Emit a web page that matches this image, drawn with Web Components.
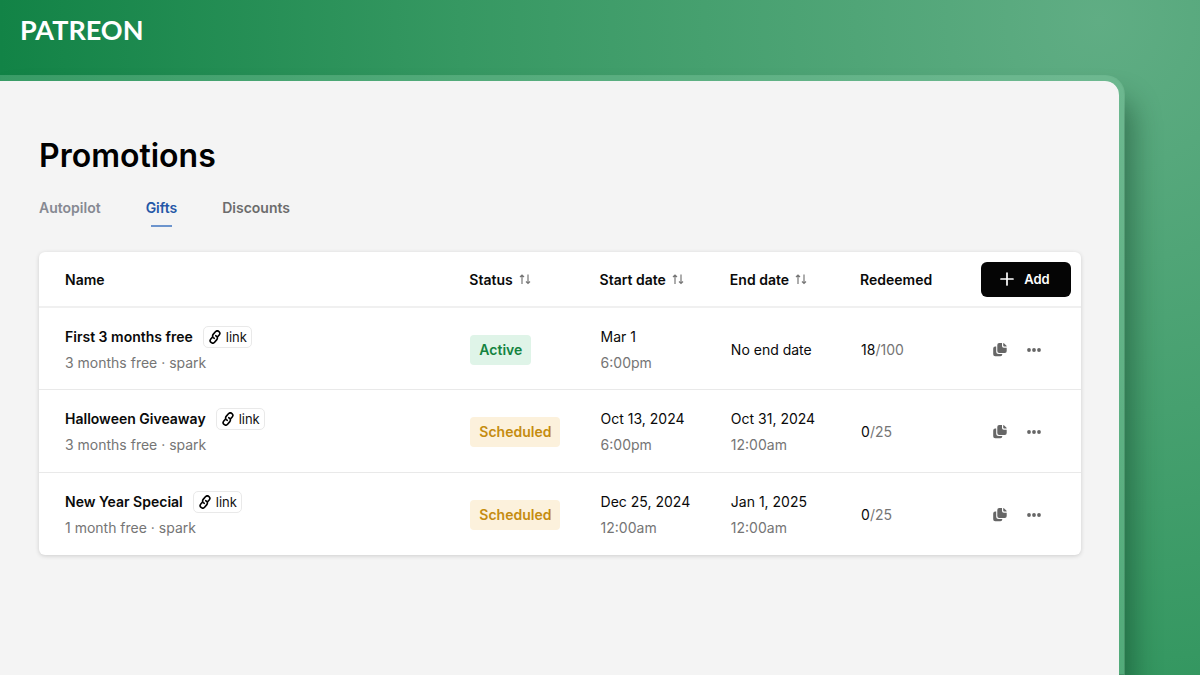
<!DOCTYPE html>
<html lang="en">
<head>
<meta charset="utf-8">
<title>Promotions</title>
<style>
html,body{margin:0;min-height:100%}
body{font-family:Inter,"Liberation Sans",sans-serif;font-size:14px;line-height:26px;color:#0a0a0a}
</style>
</head>
<body>
<promo-app></promo-app>
<script>
const define = (name, html, init) => {
  const tpl = document.createElement('template');
  tpl.innerHTML = html;
  customElements.define(name, class extends HTMLElement {
    connectedCallback() {
      if (this.shadowRoot) return;
      this.attachShadow({ mode: 'open' }).append(tpl.content.cloneNode(true));
      if (init) init(this, this.shadowRoot);
    }
  });
};

define('brand-bar', `<style>
:host{display:block;padding:14px 20px 29px;line-height:0}
a{display:inline-block;color:#fff;text-decoration:none;font:700 27px/32px Lato,Inter,sans-serif}
</style><a href="#">PATREON</a>`);

define('tab-nav', `<style>
:host{display:block}
nav{display:flex;gap:45px}
</style><nav aria-label="Promotion types"><slot></slot></nav>`);

define('tab-link', `<style>
:host{display:block;font-size:14px;font-weight:600;line-height:20px;color:#6c6c6c}
:host([muted]){color:#868992}
:host([active]){color:#2457a7}
a{display:flex;flex-direction:column;align-items:center;gap:7px;color:inherit;text-decoration:none}
a::after{content:"";width:21px;height:2px}
:host([active]) a::after{background:#6c94cd}
</style><a href="#"><slot></slot></a>`);

define('sort-button', `<style>
:host{display:inline-block}
button{display:flex;align-items:center;gap:6px;padding:0;border:0;background:none;font:inherit;color:inherit}
</style><button type="button"><slot></slot><svg width="12" height="12" viewBox="0 0 12 12" fill="none" stroke="#777" stroke-width="1.2" aria-hidden="true"><path d="M3 10V1M1 3 3 1 5 3M9 .5v9M7 7.500l2 2 2-2"/></svg></button>`);

define('add-button', `<style>
:host{display:block}
button{display:flex;align-items:center;justify-content:center;gap:10px;width:90px;height:35px;padding:0 2px 0 0;border:0;border-radius:6px;background:#050505;color:#fff;font:600 13px/20px Inter,sans-serif}
</style><button type="button"><svg width="14" height="14" viewBox="0 0 14 14" stroke="#fff" stroke-width="1.700" stroke-linecap="round" aria-hidden="true"><path d="M7 1v12M1 7h12"/></svg><slot></slot></button>`);

define('link-chip', `<style>
:host{display:inline-block}
a{display:flex;align-items:center;gap:4px;height:20px;padding:0 4px;border:1px solid #e9e9e9;border-radius:5px;color:#111;text-decoration:none;font-size:13px;font-weight:400;line-height:20px}
</style><a href="#"><svg width="14" height="14" viewBox="-7 -7 14 14" fill="none" stroke="#000" stroke-width="1.600" stroke-linecap="round" aria-hidden="true"><g transform="rotate(-49)"><path d="M-2.200-1.900H-4.200a2.500 2.500 0 0 0 0 5H-.8a2.500 2.500 0 0 0 2.300-3.400"/><path d="M2.200 1.900H4.200a2.500 2.500 0 0 0 0-5H.8a2.500 2.500 0 0 0-2.300 3.400"/></g></svg><slot></slot></a>`);

define('status-badge', `<style>
:host{display:inline-block;padding:2px 9px;border-radius:4px;font-weight:600;background:#fcf1dc;color:#c58c10}
:host([kind=active]){background:#dff4e8;color:#14833f}
</style><slot></slot>`);

define('row-actions', `<style>
:host{display:flex;gap:20px;align-items:center}
button{display:block;padding:0;border:0;background:none;line-height:0}
</style>
<button type="button" aria-label="Duplicate"><svg width="14" height="14" viewBox="0 0 14 14" fill="#666"><path d="M6.200 0H9v3q0 1.800 1.800 1.800h2.900V8q0 1.900-1.900 1.900H6.200Q4.300 9.900 4.300 8V1.900Q4.300 0 6.200 0zM10.200 0q.6 0 1 .4l2.100 2.100q.4.4.4 1h-2.500q-1 0-1-1zM2.200 3.600h1V8.500q0 2.500 2.500 2.500h3.600v.2q0 2-2 2H2.200q-2 0-2-2V5.600q0-2 2-2z"/></svg></button>
<button type="button" aria-label="More"><svg width="14" height="14" viewBox="0 0 14 14" fill="#666"><circle cx="2" cy="7" r="1.900"/><circle cx="7" cy="7" r="1.900"/><circle cx="12" cy="7" r="1.900"/></svg></button>`);

const rows = [
  ['First 3 months free', '3 months free · spark', 'Active', 'Mar 1', '6:00pm', 'No end date', '', 18, 100],
  ['Halloween Giveaway', '3 months free · spark', 'Scheduled', 'Oct 13, 2024', '6:00pm', 'Oct 31, 2024', '12:00am', 0, 25],
  ['New Year Special', '1 month free · spark', 'Scheduled', 'Dec 25, 2024', '12:00am', 'Jan 1, 2025', '12:00am', 0, 25]
];

define('promo-table', `<style>
:host{display:block;background:#fff;border-radius:6px;box-shadow:0 1px 4px rgba(0,0,0,.16)}
table{width:100%;border-collapse:separate;border-spacing:0;table-layout:fixed}
.c-name{width:41.300%}.c-col{width:12.500%}
th,td{padding:0;text-align:left;font-weight:400}
thead th{height:54px;font-weight:600}
thead th:not(:last-child){height:52px;padding-top:2px}
thead th:last-child>*{margin-right:10px;float:right}
thead th:first-child,td:first-child{padding-left:26px}
tbody td{height:80px;padding-top:2px;border-top:1px solid #e9e9e9}
tbody tr:first-child td{height:79px;border-top:2px solid #f0f0f0}
td:nth-child(n+2){padding-left:1px}
.name{display:flex;align-items:center;gap:10px;font-weight:600}
small{display:block;font-size:14px;color:#757575}
.of{color:#757575}
tbody td:last-child{padding-left:3px}
</style>
<table><colgroup><col class="c-name"><col class="c-col"><col class="c-col"><col class="c-col"><col class="c-col"><col></colgroup>
<thead><tr><th>Name</th><th><sort-button>Status</sort-button></th><th><sort-button>Start date</sort-button></th><th><sort-button>End date</sort-button></th><th>Redeemed</th><th><add-button>Add</add-button></th></tr></thead>
<tbody></tbody></table>`, (el, root) => {
  root.querySelector('tbody').innerHTML = rows.map(r => `<tr>
<td><div class="name"><span>${r[0]}</span><link-chip>link</link-chip></div><small>${r[1]}</small></td>
<td><status-badge kind="${r[2].toLowerCase()}">${r[2]}</status-badge></td>
<td>${r[3]}<small>${r[4]}</small></td>
<td>${r[5]}${r[6] ? `<small>${r[6]}</small>` : ''}</td>
<td>${r[7]}<span class="of">/${r[8]}</span></td>
<td><row-actions></row-actions></td></tr>`).join('');
});

define('promo-app', `<style>
:host{display:flex;flex-direction:column;min-height:100vh;overflow:hidden;background:radial-gradient(circle at 1100px 20px,#60ad84 0,#369862 640px,#128346 1100px)}
.panel{flex:1;margin-right:75px;border:solid rgba(150,215,180,.3);border-width:6px 6px 0 0;border-radius:0 20px 0 0;background:#f4f4f4;background-clip:padding-box;box-shadow:8px 24px 28px rgba(0,40,20,.4)}
main{padding:53px 38px 120px 39px}
h1{margin:0 0 20px;font-size:32px;line-height:44px;font-weight:600;color:#000}
promo-table{margin-top:25px}
</style>
<brand-bar></brand-bar>
<div class="panel"><main><h1>Promotions</h1>
<tab-nav><tab-link muted>Autopilot</tab-link><tab-link active>Gifts</tab-link><tab-link>Discounts</tab-link></tab-nav>
<promo-table></promo-table></main></div>`);
</script>
</body>
</html>
